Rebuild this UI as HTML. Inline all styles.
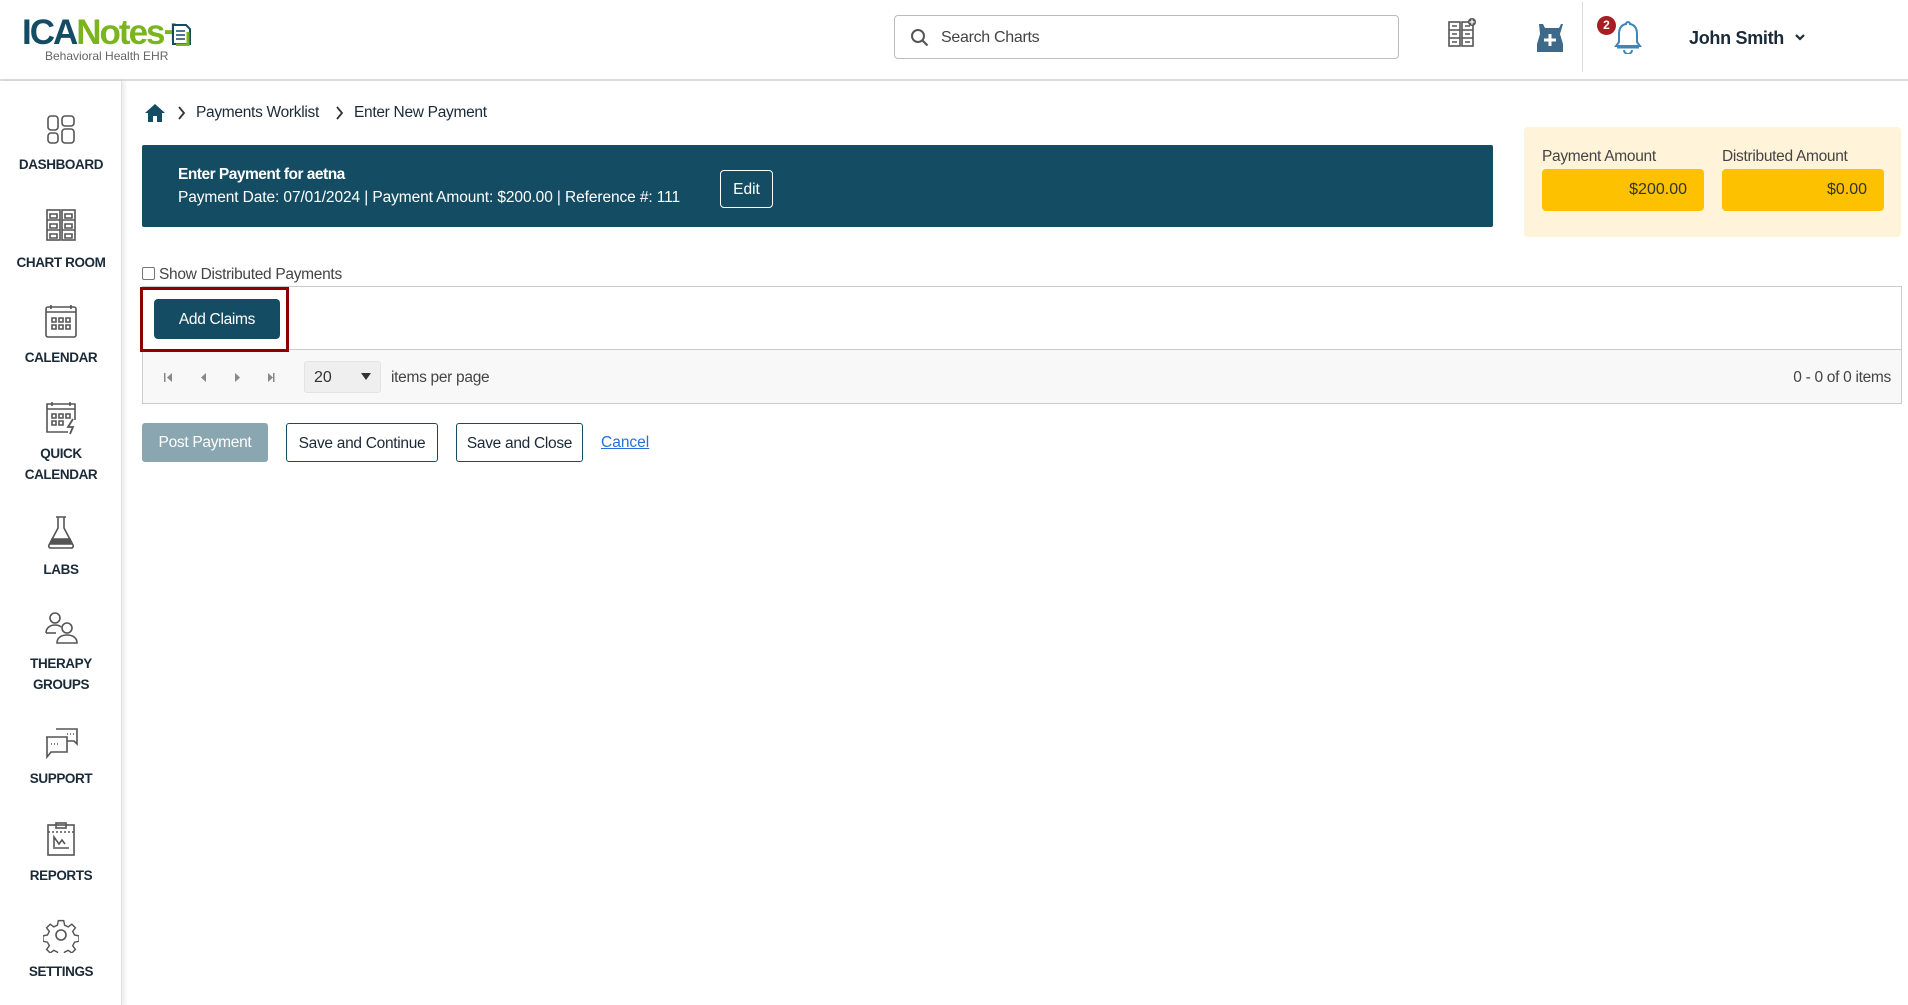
<!DOCTYPE html>
<html><head><meta charset="utf-8">
<style>
*{box-sizing:border-box;margin:0;padding:0}
body{width:1908px;height:1005px;overflow:hidden;background:#fff;font-family:"Liberation Sans",sans-serif;color:#333;position:relative}
.a{position:absolute}
.hdr{left:0;top:0;width:1908px;height:81px;border-bottom:2px solid #dcdcdc;background:#fff}
.side{left:0;top:81px;width:122px;height:924px;background:#fff;border-right:1px solid #e0e0e0;box-shadow:3px 0 4px rgba(0,0,0,.08)}
.nav{position:absolute;left:0;width:122px;text-align:center;font-size:13.5px;font-weight:bold;color:#1b2a38;line-height:21px;letter-spacing:-.4px}
.nav svg{display:block;margin:0 auto 8px}
.btn{position:absolute;border:1px solid #144d63;border-radius:3px;font-size:15.5px;color:#1b2a38;display:flex;align-items:center;justify-content:center;background:#fff;letter-spacing:-.3px}
</style></head><body>
<div class="a hdr"></div>
<div class="a" style="left:22px;top:14px;font-size:35px;font-weight:bold;letter-spacing:-2px;line-height:38px"><span style="color:#144d63">ICA</span><span style="color:#7ab51d">Notes</span><span style="color:#7ab51d">+</span></div>
<svg class="a" style="left:170px;top:22px" width="22" height="24"><path d="M3 3h13l4 4v15H3z" fill="#fff" stroke="#144d63" stroke-width="2"/><path d="M6 9h9M6 13h9M6 17h9" stroke="#144d63" stroke-width="1.5"/><path d="M18 10v13H6" stroke="#7ab51d" stroke-width="3" fill="none"/></svg>
<div class="a" style="left:45px;top:49px;font-size:12px;color:#666">Behavioral Health EHR</div>

<div class="a" style="left:894px;top:15px;width:505px;height:44px;border:1px solid #bbb;border-radius:4px"></div>
<svg class="a" style="left:910px;top:28px" width="20" height="20"><circle cx="8" cy="8" r="6" fill="none" stroke="#555" stroke-width="2"/><path d="M12.5 12.5l5 5" stroke="#555" stroke-width="2.2"/></svg>
<div class="a" style="left:941px;top:29px;font-size:16px;color:#444;letter-spacing:-.3px">Search Charts</div>

<svg class="a" style="left:1447px;top:18px" width="30" height="32"><g fill="none" stroke="#555" stroke-width="1.6"><rect x="2" y="4" width="11" height="24"/><rect x="15" y="4" width="11" height="24"/><path d="M2 12h11M2 20h11M15 12h11M15 20h11M5 8h5M5 16h5M5 24h5M18 8h5M18 16h5M18 24h5"/></g><circle cx="25" cy="4" r="4" fill="#555"/><path d="M25 1.5v5M22.5 4h5" stroke="#fff" stroke-width="1.3"/></svg>
<svg class="a" style="left:1535px;top:20px" width="30" height="34"><path d="M4 4h4l2 4h14l2-4h2l-3 10 3 10v8H2v-8l3-10z" fill="#3d6a8a"/><path d="M15 14v12M9 20h12" stroke="#fff" stroke-width="3"/></svg>
<div class="a" style="left:1582px;top:2px;width:1px;height:70px;background:#ddd"></div>
<svg class="a" style="left:1612px;top:18px" width="32" height="36"><path d="M16 4a2 2 0 0 1 2 2c5 1 7 5 7 10v8l3 4H4l3-4v-8c0-5 2-9 7-10a2 2 0 0 1 2-2z" fill="#fff" stroke="#3d87b8" stroke-width="2"/><path d="M5 29h22" stroke="#3d87b8" stroke-width="3"/><path d="M12 32a4 4 0 0 0 8 0" fill="none" stroke="#3d87b8" stroke-width="2"/></svg>
<div class="a" style="left:1597px;top:16px;width:19px;height:19px;border-radius:50%;background:#a61e22;color:#fff;font-size:12px;font-weight:bold;text-align:center;line-height:19px">2</div>
<div class="a" style="left:1689px;top:28px;font-size:18px;font-weight:bold;color:#1b2a38;letter-spacing:-.3px">John Smith</div>
<svg class="a" style="left:1794px;top:33px" width="12" height="10"><path d="M2 2l4 4 4-4" fill="none" stroke="#1b2a38" stroke-width="2.2"/></svg>

<div class="a side"></div>
<div class="nav" style="top:114px"><svg width="32" height="32" fill="none" stroke="#555" stroke-width="1.6"><rect x="3" y="2" width="10" height="14" rx="3"/><rect x="17" y="2" width="12" height="10" rx="3"/><rect x="3" y="19" width="10" height="10" rx="3"/><rect x="17" y="15" width="12" height="14" rx="3"/></svg>DASHBOARD</div>
<div class="nav" style="top:208px"><svg width="34" height="36" fill="none" stroke="#555" stroke-width="1.6"><rect x="3" y="2" width="13" height="30"/><rect x="18" y="2" width="13" height="30"/><path d="M3 12h13M3 22h13M18 12h13M18 22h13M6 6h7v4H6zM21 6h7v4h-7zM6 16h7v4H6zM21 16h7v4h-7zM6 26h7v4H6zM21 26h7v4h-7z"/></svg>CHART ROOM</div>
<div class="nav" style="top:303px"><svg width="36" height="36" fill="none" stroke="#555" stroke-width="1.6"><rect x="3" y="4" width="30" height="30" rx="2"/><path d="M3 9h30M8 2v4M28 2v4"/><path d="M9 15h4v4H9zM16 15h4v4h-4zM23 15h4v4h-4zM9 22h4v4H9zM16 22h4v4h-4zM23 22h4v4h-4z"/></svg>CALENDAR</div>
<div class="nav" style="top:399px"><svg width="36" height="36" fill="none" stroke="#555" stroke-width="1.6"><path d="M25 33H4V5h28v16"/><path d="M4 10h28M9 3v4M27 3v4M9 15h4v4H9zM16 15h4v4h-4zM23 15h4v4h-4zM9 22h4v4H9zM16 22h4v4h-4z"/><path d="M30 20l-5 8h5l-3 7" stroke-width="1.8"/></svg>QUICK<br>CALENDAR</div>
<div class="nav" style="top:515px"><svg width="32" height="36" fill="none" stroke="#555" stroke-width="1.6"><path d="M11 2h10M13 2v11L4 30a2 2 0 0 0 2 3h20a2 2 0 0 0 2-3L19 13V2"/><path d="M7 24h18l2 5H5z" fill="#555"/></svg>LABS</div>
<div class="nav" style="top:611px"><svg width="34" height="34" fill="none" stroke="#555" stroke-width="1.6"><circle cx="11" cy="7" r="5"/><path d="M2 22c0-5 4-8 9-8 3 0 5 1 6 2"/><circle cx="23" cy="17" r="5"/><path d="M13 32c0-5 4-8 10-8s10 3 10 8z"/><path d="M2 22h10"/></svg>THERAPY<br>GROUPS</div>
<div class="nav" style="top:726px"><svg width="36" height="34" fill="none" stroke="#555" stroke-width="1.6"><path d="M13 3h21v15l-3-3H24"/><path d="M3 11h21v15H8l-4 5V11z" fill="#fff"/><path d="M8 18h1M11 18h1M14 18h1M24 8h1M27 8h1M30 8h1"/></svg>SUPPORT</div>
<div class="nav" style="top:821px"><svg width="34" height="36" fill="none" stroke="#555" stroke-width="1.6"><rect x="4" y="4" width="26" height="30"/><rect x="12" y="2" width="10" height="5"/><path d="M4 11h26" stroke-dasharray="2 2"/><path d="M9 27h16M10 26V16l5 7 3-4 3 4"/></svg>REPORTS</div>
<div class="nav" style="top:917px"><svg width="36" height="36" fill="none" stroke="#555" stroke-width="1.6"><path d="M15 2h6l1 5 4 2 4-3 4 4-3 4 2 4 5 1v6l-5 1-2 4 3 4-4 4-4-3-4 2-1 5h-6l-1-5-4-2-4 3-4-4 3-4-2-4-5-1v-6l5-1 2-4-3-4 4-4 4 3 4-2z" transform="scale(.9) translate(2,2)"/><circle cx="18" cy="18" r="5"/></svg>SETTINGS</div>

<svg class="a" style="left:144px;top:103px" width="22" height="20"><path d="M11 1L1 10h3v9h5v-6h4v6h5v-9h3z" fill="#144d63"/></svg>
<svg class="a" style="left:178px;top:106px" width="8" height="14"><path d="M1 1l5 6-5 6" fill="none" stroke="#333" stroke-width="1.8"/></svg>
<div class="a" style="left:196px;top:104px;font-size:15.5px;color:#1b2a38;letter-spacing:-.3px">Payments Worklist</div>
<svg class="a" style="left:336px;top:106px" width="8" height="14"><path d="M1 1l5 6-5 6" fill="none" stroke="#333" stroke-width="1.8"/></svg>
<div class="a" style="left:354px;top:104px;font-size:15.5px;color:#1b2a38;letter-spacing:-.3px">Enter New Payment</div>

<div class="a" style="left:142px;top:145px;width:1351px;height:82px;background:#144d63;border-radius:2px"></div>
<div class="a" style="left:178px;top:166px;font-size:15.5px;font-weight:bold;color:#fff;letter-spacing:-.5px">Enter Payment for aetna</div>
<div class="a" style="left:178px;top:189px;font-size:15.5px;color:#fff;letter-spacing:-.1px">Payment Date: 07/01/2024 | Payment Amount: $200.00 | Reference #: 111</div>
<div class="a" style="left:720px;top:170px;width:53px;height:38px;border:1px solid #fff;border-radius:4px;color:#fff;font-size:15.5px;text-align:center;line-height:38px">Edit</div>

<div class="a" style="left:1524px;top:127px;width:377px;height:110px;background:#fff4d9;border-radius:4px"></div>
<div class="a" style="left:1542px;top:148px;font-size:15.5px;color:#444;letter-spacing:-.3px">Payment Amount</div>
<div class="a" style="left:1722px;top:148px;font-size:15.5px;color:#444;letter-spacing:-.3px">Distributed Amount</div>
<div class="a" style="left:1542px;top:169px;width:162px;height:42px;background:#fdc100;border-radius:4px;text-align:right;padding-right:17px;line-height:42px;font-size:16px;color:#333">$200.00</div>
<div class="a" style="left:1722px;top:169px;width:162px;height:42px;background:#fdc100;border-radius:4px;text-align:right;padding-right:17px;line-height:42px;font-size:16px;color:#333">$0.00</div>

<div class="a" style="left:142px;top:267px;width:13px;height:13px;border:1px solid #777;border-radius:2px"></div>
<div class="a" style="left:159px;top:266px;font-size:15.5px;color:#444;letter-spacing:-.3px">Show Distributed Payments</div>

<div class="a" style="left:142px;top:286px;width:1760px;height:118px;border:1px solid #ccc"></div>
<div class="a" style="left:143px;top:349px;width:1758px;height:54px;background:#f8f8f8;border-top:1px solid #ccc"></div>
<div class="a" style="left:140px;top:287px;width:149px;height:65px;border:3px solid #8b0000"></div>
<div class="a" style="left:154px;top:299px;width:126px;height:40px;background:#144d63;border-radius:4px;color:#fff;font-size:15.5px;text-align:center;line-height:42px;letter-spacing:-.3px">Add Claims</div>

<svg class="a" style="left:162px;top:371px" width="120" height="14" fill="#888"><rect x="2" y="2" width="1.5" height="9"/><path d="M10 2v9l-5-4.5z"/><path d="M44 2v9l-5-4.5z"/><path d="M73 2v9l5-4.5z"/><path d="M106 2v9l5-4.5z"/><rect x="111" y="2" width="1.5" height="9"/></svg>
<div class="a" style="left:304px;top:361px;width:77px;height:32px;background:#efefef;border:1px solid #e3e3e3;border-radius:3px"></div>
<div class="a" style="left:314px;top:369px;font-size:16px;color:#333">20</div>
<svg class="a" style="left:361px;top:373px" width="10" height="8"><path d="M0 0h10L5 7z" fill="#333"/></svg>
<div class="a" style="left:391px;top:369px;font-size:15.5px;color:#444;letter-spacing:-.3px">items per page</div>
<div class="a" style="left:1700px;top:369px;width:191px;text-align:right;font-size:15.5px;color:#444;letter-spacing:-.3px">0 - 0 of 0 items</div>

<div class="a" style="left:142px;top:423px;width:126px;height:39px;background:#89a6b1;border-radius:3px;color:#fff;font-size:15.5px;text-align:center;line-height:40px;letter-spacing:-.3px">Post Payment</div>
<div class="btn" style="left:286px;top:423px;width:152px;height:39px;padding-top:2px">Save and Continue</div>
<div class="btn" style="left:456px;top:423px;width:127px;height:39px;padding-top:2px">Save and Close</div>
<div class="a" style="left:601px;top:434px;font-size:15.5px;color:#2a6fd6;text-decoration:underline">Cancel</div>
</body></html>
